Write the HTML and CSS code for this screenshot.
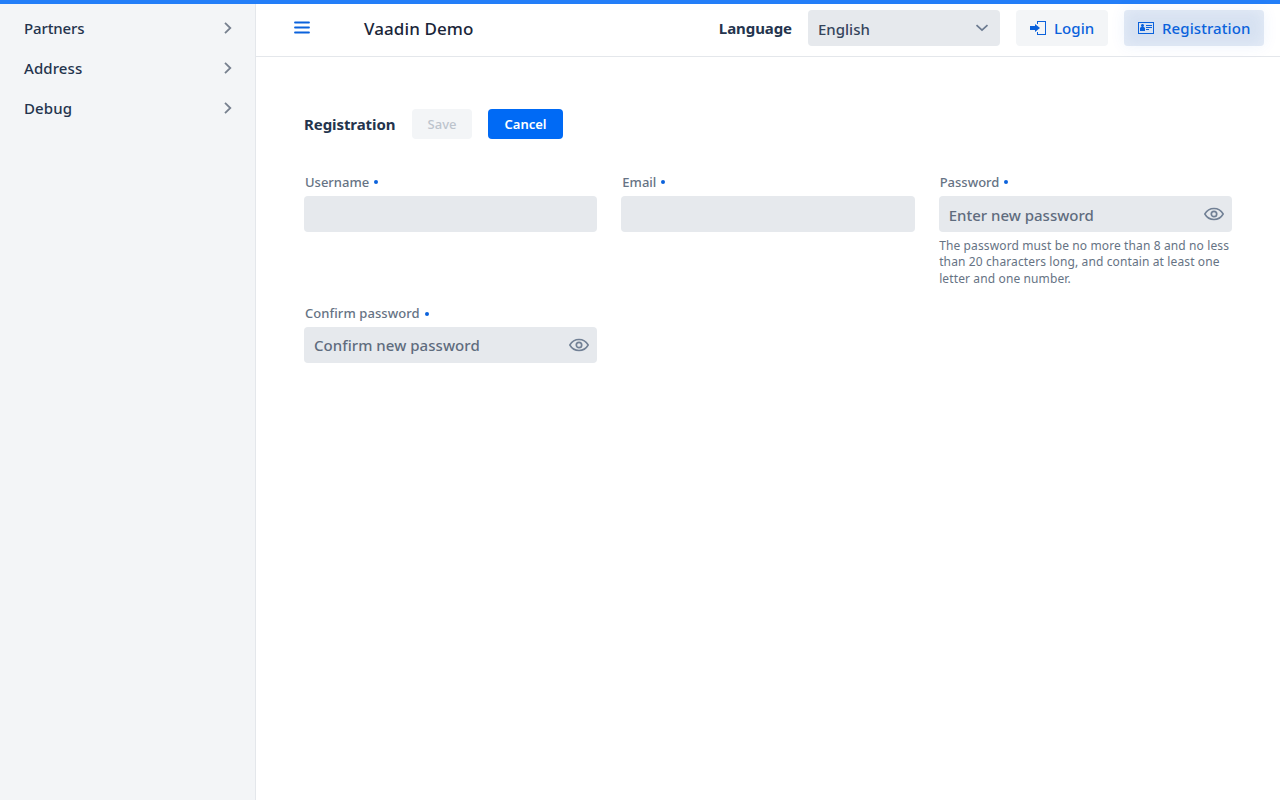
FILE: index.html
```html
<!DOCTYPE html>
<html lang="en">
<head>
<meta charset="utf-8">
<title>Vaadin Demo</title>
<link rel="stylesheet" href="styles.css">
</head>
<body>
<svg class="defs" aria-hidden="true">
  <symbol id="chevron" viewBox="0 0 10 14"><path d="M2 1.800 7.300 7 2 12.200" fill="none" stroke="currentColor" stroke-width="1.800"/></symbol>
  <symbol id="eye" viewBox="0 0 20 14"><path d="M.8 7C3 3.200 6.200 1.500 10 1.500S17 3.200 19.200 7C17 10.800 13.800 12.500 10 12.500S3 10.800.8 7Z" fill="none" stroke="currentColor" stroke-width="1.500"/><circle cx="10" cy="7" r="2.700" fill="none" stroke="currentColor" stroke-width="1.700"/></symbol>
</svg>
<div class="progress"></div>
<div class="app">
  <nav class="drawer">
    <a class="nav-item partners"><span>Partners</span><svg class="nav-chevron"><use href="#chevron"/></svg></a>
    <a class="nav-item"><span>Address</span><svg class="nav-chevron"><use href="#chevron"/></svg></a>
    <a class="nav-item"><span>Debug</span><svg class="nav-chevron"><use href="#chevron"/></svg></a>
  </nav>
  <div class="page">
    <header class="navbar">
      <svg class="toggle" viewBox="0 0 16 14"><path d="M1 1.500h14M1 6.500h14M1 11.500h14" stroke="currentColor" stroke-width="1.800" stroke-linecap="round"/></svg>
      <h1 class="title">Vaadin Demo</h1>
      <span class="language">Language</span>
      <div class="select"><span>English</span><svg class="select-arrow" viewBox="0 0 14 8"><path d="M1.500 1.200 7 6.200 12.500 1.200" fill="none" stroke="currentColor" stroke-width="1.700"/></svg></div>
      <button class="button login"><svg class="icon" viewBox="0 0 16 16" fill="currentColor" shape-rendering="crispEdges"><path d="M7 1v3h1V2h7v12H8v-2H7v3h9V1z"/><path shape-rendering="auto" d="M10 8 5 4v2H0v4h5v2z"/></svg><span>Login</span></button>
      <button class="button register"><svg class="icon" viewBox="0 0 16 16" fill="currentColor" shape-rendering="crispEdges"><path d="M15 3v10H1V3h14zm1-1H0v12h16V2z"/><path d="M8 5h6v1H8zM8 7h6v1H8zM8 9h3v1H8z"/><path shape-rendering="auto" d="M5.400 7h-.4V6.900c.6-.2 1-.8 1-1.400C6 4.700 5.300 4 4.500 4S3 4.700 3 5.500c0 .7.400 1.200 1 1.400V7h-.4C2.700 7 2 7.700 2 8.600V11h5V8.600C7 7.700 6.300 7 5.400 7z"/></svg><span>Registration</span></button>
    </header>
    <main class="content">
      <div class="toolbar">
        <h2 class="heading">Registration</h2>
        <button class="small-button save" disabled>Save</button>
        <button class="small-button cancel">Cancel</button>
      </div>
      <form class="form">
        <div class="field"><label class="label">Username<i class="dot"></i></label><div class="input"></div></div>
        <div class="field"><label class="label">Email<i class="dot"></i></label><div class="input"></div></div>
        <div class="field"><label class="label">Password<i class="dot"></i></label><div class="input"><span>Enter new password</span><svg class="eye"><use href="#eye"/></svg></div>
          <p class="helper">The password must be no more than 8 and no less<br>than 20 characters long, and contain at least one<br>letter and one number.</p></div>
        <div class="field confirm"><label class="label">Confirm password<i class="dot"></i></label><div class="input"><span>Confirm new password</span><svg class="eye"><use href="#eye"/></svg></div></div>
      </form>
    </main>
  </div>
</div>
</body>
</html>
```
FILE: styles.css
```css
* { box-sizing: border-box; }
body { margin: 0; height: 800px; overflow: hidden; background: #fff; color: #24344d; font: 500 15px/24px "Noto Sans", "Open Sans", sans-serif; }
.defs { position: absolute; width: 0; height: 0; }
.progress { height: 4px; background: #237ef8; }
.app { display: flex; height: 796px; }
.drawer { width: 256px; padding: 4px 24px 0; background: #f3f5f7; border-right: 1px solid #e4e7eb; }
.nav-item { display: flex; align-items: center; justify-content: space-between; height: 40px; letter-spacing: .1px; }
.partners { letter-spacing: -.15px; }
.nav-chevron { width: 10px; height: 14px; margin-right: -2px; color: #77818f; }
.page { flex: 1; min-width: 0; }
.navbar { display: flex; align-items: center; height: 53px; padding: 0 16px 4px 38px; border-bottom: 1px solid #e4e7eb; }
.toggle { width: 16px; height: 14px; color: #0b62dc; }
.title { margin: 2px auto 0 54px; font-size: 17px; font-weight: 500; letter-spacing: .1px; color: #1a2639; }
.language { font-weight: 700; margin-right: 16px; letter-spacing: -.08px; }
.select { display: flex; align-items: center; justify-content: space-between; width: 192px; height: 36px; padding: 2px 11px 0 10px; background: #e6e9ed; border-radius: 4px; color: #34445b; }
.select-arrow { width: 14px; height: 8px; margin-top: -3px; color: #6b7a90; }
.button { display: flex; align-items: center; height: 36px; padding: 0 14px; margin-left: 16px; border: 0; border-radius: 4px; background: #f3f5f7; color: #0b62dc; font: inherit; letter-spacing: .08px; }
.login { width: 92px; }
.register { width: 140px; background: #d7e2f2; box-shadow: 0 0 16px rgba(0, 100, 230, .07), inset 0 0 14px rgba(240, 244, 250, .6); }
.icon { flex: none; width: 16px; height: 16px; margin-right: 8px; }
.content { padding: 52px 48px; }
.toolbar { display: flex; align-items: center; gap: 16px; height: 30px; }
.heading { width: 92px; margin: 0; font-size: 15px; font-weight: 700; letter-spacing: -.08px; white-space: nowrap; }
.small-button { height: 30px; padding: 0; border: 0; border-radius: 4px; font: 500 13px/30px "Noto Sans", sans-serif; }
.save { width: 60px; background: #f3f5f7; color: #bdc4cd; }
.cancel { width: 75px; background: #006af5; color: #fff; font-weight: 600; }
.form { display: grid; grid-template-columns: repeat(3, 1fr); column-gap: 24px; row-gap: 16.800px; margin-top: 33px; }
.label { display: flex; align-items: center; height: 19px; padding-left: 1px; margin-bottom: 5px; font-size: 13px; color: #667384; }
.confirm .label { height: 18px; letter-spacing: .07px; }
.dot { width: 4px; height: 4px; margin: 1px 0 0 5px; border-radius: 50%; background: #0b62dc; }
.input { display: flex; align-items: center; justify-content: space-between; height: 36px; padding: 2px 8px 0 10px; background: #e6e9ed; border-radius: 4px; color: #5f6c7e; }
.confirm .input { padding: 0 8px 0 10px; letter-spacing: .05px; }
.eye { width: 20px; height: 14px; margin-top: -3px; color: #718095; }
.confirm .eye { margin-top: -1px; }
.helper { margin: 6px 0 0; font-size: 12px; font-weight: 400; line-height: 16.400px; padding-left: .5px; letter-spacing: .12px; color: #667384; white-space: nowrap; }
```
